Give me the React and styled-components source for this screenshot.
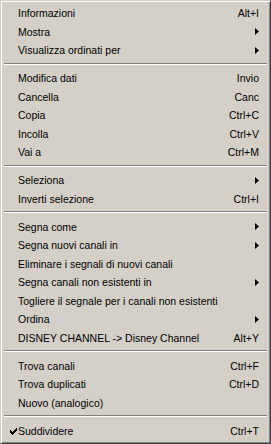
import React from "react";
import styled, { createGlobalStyle } from "styled-components";

const Global = createGlobalStyle`
  html, body { margin: 0; padding: 0; background: #d4d0c8; }
  body { font-family: "Liberation Sans", Arial, sans-serif; }
`;

const Menu = styled.div`
  box-sizing: border-box;
  width: 271px;
  height: 444px;
  background: #d4d0c8;
  border: 1px solid;
  border-color: #d4d0c8 #404040 #404040 #d4d0c8;
  box-shadow: inset 1px 1px 0 #ffffff, inset -1px -1px 0 #808080;
  padding: 3px 2px;
  display: flex;
  flex-direction: column;
  font-family: "Liberation Sans", Arial, sans-serif;
  font-size: 10.5px;
  color: #000;
  overflow: hidden;
`;

const Item = styled.div`
  display: flex;
  align-items: center;
  height: 18.5px;
  flex: none;
  padding: 0 9px 0 15px;
  position: relative;
  white-space: nowrap;
`;

const Label = styled.span`
  flex: 1;
`;

const Shortcut = styled.span`
  margin-left: 12px;
`;

const Separator = styled.div`
  flex: none;
  height: 0;
  margin: 3px 1px 4.5px;
  border-top: 1px solid #808080;
  border-bottom: 1px solid #ffffff;
`;

const CheckSlot = styled.span`
  position: absolute;
  left: 7px;
  top: 50%;
  margin-top: -3px;
  width: 7px;
  height: 7px;
  display: flex;
`;

const Arrow = () => (
  <svg width="4" height="7" viewBox="0 0 4 7" style={{ display: "block" }}>
    <path d="M0 0 L4 3.5 L0 7 Z" fill="#000" />
  </svg>
);

const Check = () => (
  <svg width="7" height="7" viewBox="0 0 7 7" shapeRendering="crispEdges">
    <path
      d="M6 0h1v3h-1v1h-1v1h-1v1h-1v1h-1v-1h-1v-1h-1v-3h1v1h1v1h1v-1h1v-1h1z"
      fill="#000"
    />
  </svg>
);

const groups = [
  [
    { label: "Informazioni", sc: "Alt+I" },
    { label: "Mostra", sub: true },
    { label: "Visualizza ordinati per", sub: true },
  ],
  [
    { label: "Modifica dati", sc: "Invio" },
    { label: "Cancella", sc: "Canc" },
    { label: "Copia", sc: "Ctrl+C" },
    { label: "Incolla", sc: "Ctrl+V" },
    { label: "Vai a", sc: "Ctrl+M" },
  ],
  [
    { label: "Seleziona", sub: true },
    { label: "Inverti selezione", sc: "Ctrl+I" },
  ],
  [
    { label: "Segna come", sub: true },
    { label: "Segna nuovi canali in", sub: true },
    { label: "Eliminare i segnali di nuovi canali" },
    { label: "Segna canali non esistenti in", sub: true },
    { label: "Togliere il segnale per i canali non esistenti" },
    { label: "Ordina", sub: true },
    { label: "DISNEY CHANNEL -> Disney Channel", sc: "Alt+Y" },
  ],
  [
    { label: "Trova canali", sc: "Ctrl+F" },
    { label: "Trova duplicati", sc: "Ctrl+D" },
    { label: "Nuovo (analogico)" },
  ],
  [{ label: "Suddividere", sc: "Ctrl+T", checked: true }],
];

export default function App() {
  return (
    <>
      <Global />
      <Menu>
        {groups.map((g, gi) => (
          <React.Fragment key={gi}>
            {gi > 0 && <Separator />}
            {g.map((it) => (
              <Item key={it.label}>
                {it.checked && (
                  <CheckSlot>
                    <Check />
                  </CheckSlot>
                )}
                <Label>{it.label}</Label>
                {it.sc && <Shortcut>{it.sc}</Shortcut>}
                {it.sub && <Arrow />}
              </Item>
            ))}
          </React.Fragment>
        ))}
      </Menu>
    </>
  );
}
